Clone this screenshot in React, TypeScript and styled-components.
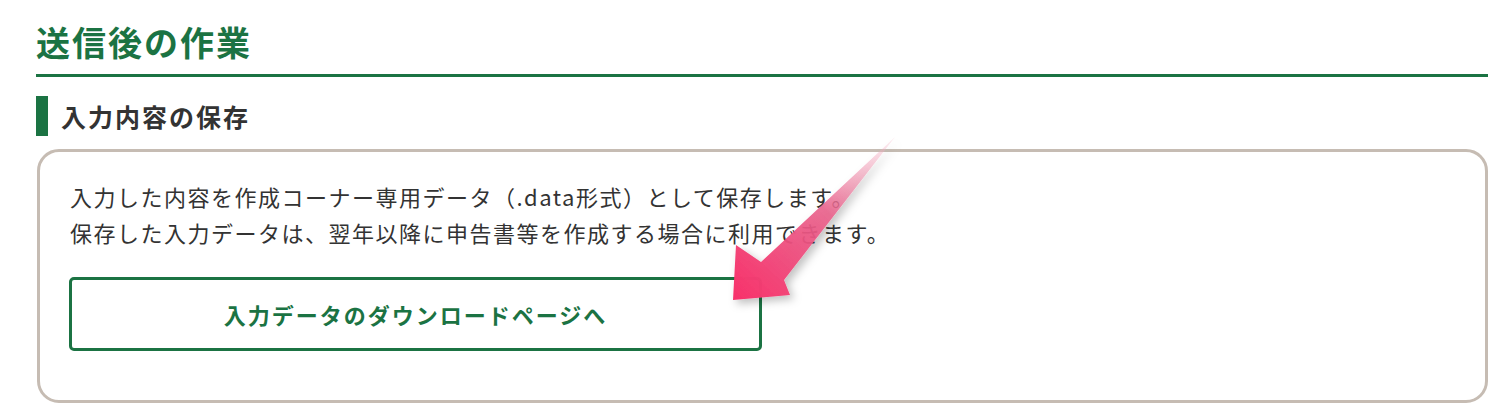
import React from "react";
import styled, { createGlobalStyle } from "styled-components";

const GREEN = "#1b7343";

const GlobalStyle = createGlobalStyle`
  html, body {
    margin: 0;
    padding: 0;
    background: #fff;
  }
  body {
    font-family: "Noto Sans CJK JP", "Noto Sans", sans-serif;
    color: #333;
  }
`;

const Page = styled.div`
  position: relative;
  width: 1452px;
  padding: 18px 0 0 36px;
`;

const Title = styled.h1`
  margin: 0;
  padding-bottom: 8px;
  border-bottom: 3px solid ${GREEN};

  font-size: 34px;
  font-weight: 700;
  line-height: 48px;
  letter-spacing: 2px;
  color: ${GREEN};
`;

const SubTitle = styled.h2`
  margin: 19px 0 0;
  height: 40px;
  padding-left: 13px;
  border-left: 12px solid ${GREEN};

  display: flex;
  align-items: center;

  font-size: 25px;
  font-weight: 700;
  letter-spacing: 2px;
  color: #333;
`;

const Box = styled.section`
  margin-top: 13px;
  margin-left: 1px;
  padding: 26px 30px 49px 30px;

  border: 3px solid #c6bcb3;
  border-radius: 22px;
`;

const Lead = styled.p`
  margin: 0;

  font-size: 22px;
  line-height: 36px;
  letter-spacing: 1.5px;
  color: #333;
`;

const DownloadButton = styled.a`
  margin: 27px 0 0 -1px;
  width: 693px;
  height: 74px;
  box-sizing: border-box;

  display: flex;
  align-items: center;
  justify-content: center;

  border: 3px solid ${GREEN};
  border-radius: 5px;
  background: #fff;

  font-size: 22px;
  font-weight: 700;
  letter-spacing: 2px;
  color: ${GREEN};
  text-decoration: none;
  cursor: pointer;
`;

const Arrow = styled.svg`
  position: absolute;
  left: 0;
  top: 0;
  pointer-events: none;
  overflow: visible;
`;

const PinkArrow = () => (
  <Arrow width="1512" height="411" viewBox="0 0 1512 411">
    <defs>
      <linearGradient id="arrowFill" x1="895" y1="138" x2="740" y2="298" gradientUnits="userSpaceOnUse">
        <stop offset="0" stopColor="#f4b6c8" stopOpacity="0.25" />
        <stop offset="0.45" stopColor="#e9618b" stopOpacity="0.9" />
        <stop offset="1" stopColor="#f7336c" />
      </linearGradient>
      <filter id="arrowShadow" x="-20%" y="-20%" width="140%" height="140%">
        <feDropShadow dx="4" dy="4" stdDeviation="4" floodColor="#000" floodOpacity="0.25" />
      </filter>
    </defs>
    <polygon
      points="895,137 784,280 790,295 733,300 736,245 761,262"
      fill="url(#arrowFill)"
      filter="url(#arrowShadow)"
    />
  </Arrow>
);

export default function App() {
  return (
    <>
      <GlobalStyle />
      <Page>
        <Title>送信後の作業</Title>
        <SubTitle>入力内容の保存</SubTitle>
        <Box>
          <Lead>
            入力した内容を作成コーナー専用データ（.data形式）として保存します。
            <br />
            保存した入力データは、翌年以降に申告書等を作成する場合に利用できます。
          </Lead>
          <DownloadButton>入力データのダウンロードページへ</DownloadButton>
        </Box>
        <PinkArrow />
      </Page>
    </>
  );
}
